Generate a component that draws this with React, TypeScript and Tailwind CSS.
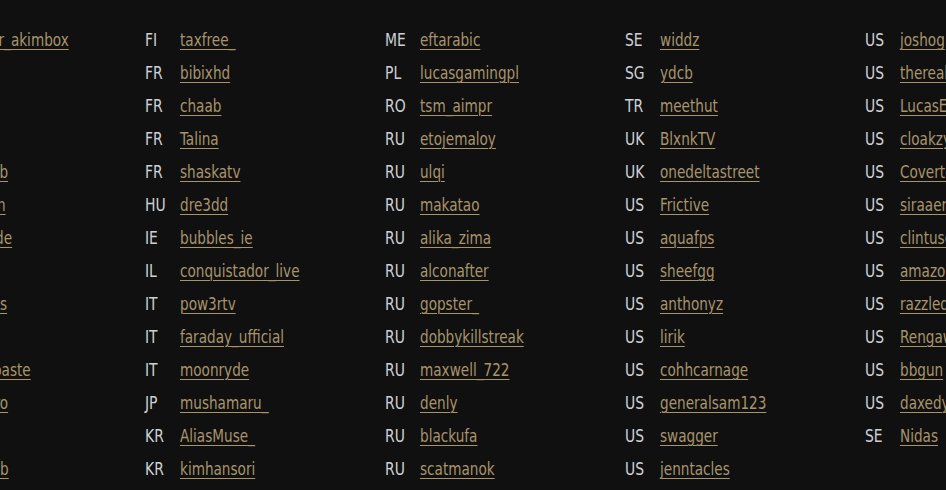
import React from 'react';

type Entry = [string, string];

const columns: Entry[][] = [
    [
        ["DE", "beaulieur_akimbox"], ["DE", "gronkh"], ["DE", "tolkin"], ["DE", "shlorox"],
        ["DE", "handicrab"], ["DE", "dorfjungn"], ["DE", "trymacsde"], ["DE", "unge"],
        ["DK", "maximtvs"], ["DK", "monte"], ["ES", "joecopypaste"], ["ES", "zarbexpro"],
        ["FI", "dner"], ["FI", "knossihub"],
    ],
    [
        ["FI", "taxfree_"], ["FR", "bibixhd"], ["FR", "chaab"], ["FR", "Talina"],
        ["FR", "shaskatv"], ["HU", "dre3dd"], ["IE", "bubbles_ie"], ["IL", "conquistador_live"],
        ["IT", "pow3rtv"], ["IT", "faraday_ufficial"], ["IT", "moonryde"], ["JP", "mushamaru_"],
        ["KR", "AliasMuse_"], ["KR", "kimhansori"],
    ],
    [
        ["ME", "eftarabic"], ["PL", "lucasgamingpl"], ["RO", "tsm_aimpr"], ["RU", "etojemaloy"],
        ["RU", "ulqi"], ["RU", "makatao"], ["RU", "alika_zima"], ["RU", "alconafter"],
        ["RU", "gopster_"], ["RU", "dobbykillstreak"], ["RU", "maxwell_722"], ["RU", "denly"],
        ["RU", "blackufa"], ["RU", "scatmanok"],
    ],
    [
        ["SE", "widdz"], ["SG", "ydcb"], ["TR", "meethut"], ["UK", "BlxnkTV"],
        ["UK", "onedeltastreet"], ["US", "Frictive"], ["US", "aquafps"], ["US", "sheefgg"],
        ["US", "anthonyz"], ["US", "lirik"], ["US", "cohhcarnage"], ["US", "generalsam123"],
        ["US", "swagger"], ["US", "jenntacles"],
    ],
    [
        ["US", "joshog"], ["US", "therealxanthe"], ["US", "LucasEtter"], ["US", "cloakzy"],
        ["US", "CovertOps"], ["US", "siraaero"], ["US", "clintusgg"], ["US", "amazonfox"],
        ["US", "razzledazzle"], ["US", "Rengaw"], ["US", "bbgun"], ["US", "daxedy"],
        ["SE", "Nidas"],
    ],
];

export default function App() {
    return (
        <div
            className="w-[946px] h-[490px] overflow-hidden bg-[#101010]"
            style={{ fontFamily: '"Liberation Sans Narrow", "DejaVu Sans Condensed", sans-serif' }}
        >
            <div className="flex -ml-[95px] pt-[23px]">
                {columns.map((col, ci) => (
                    <ul key={ci} className="flex flex-col w-[240px] shrink-0">
                        {col.map(([code, name], ri) => (
                            <li key={ri} className="flex items-center h-[33px] text-[18px] leading-[33px] whitespace-nowrap">
                                <span className="w-[35px] shrink-0">
                                    <span className="inline-block origin-left scale-x-[0.86] text-[#cdd0d6]">{code}</span>
                                </span>
                                <a className="inline-block origin-left scale-x-[0.84] text-[#a8946c] underline underline-offset-[3px] decoration-[1px]">{name}</a>
                            </li>
                        ))}
                    </ul>
                ))}
            </div>
        </div>
    );
}
